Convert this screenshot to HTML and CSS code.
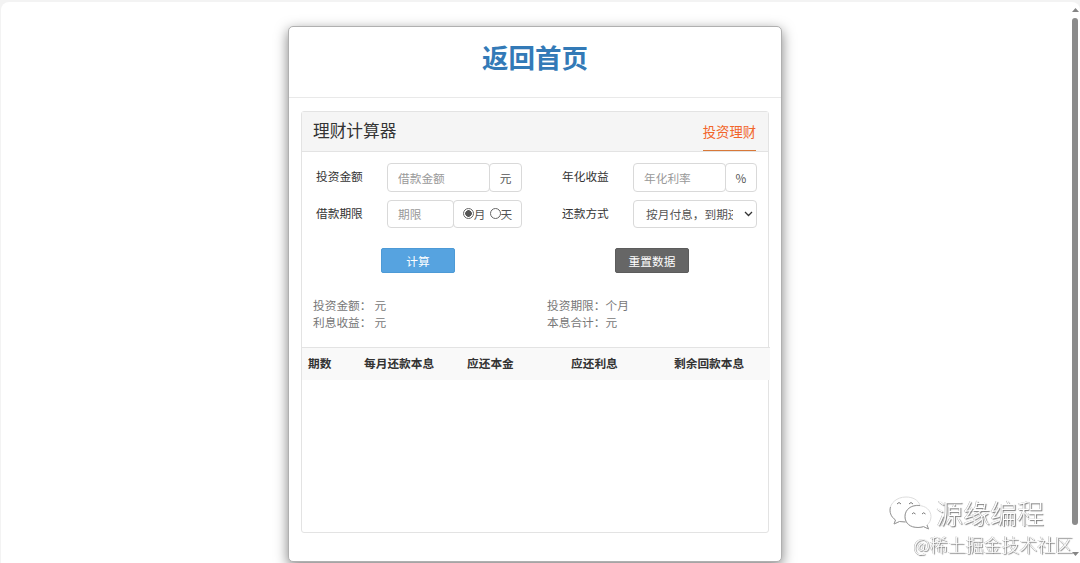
FILE: index.html
```
<!DOCTYPE html>
<html lang="zh-CN">
<head>
    <meta charset="UTF-8">
    <meta name="viewport" content="width=device-width, initial-scale=1.0">
    <title>理财计算器</title>
    <link rel="stylesheet" href="styles.css">
</head>
<body>
    <div class="page">
        <div class="modal-content">
            <div class="modal-header">
                <h1><a href="#">返回首页</a></h1>
            </div>
            <div class="modal-body">
                <div class="panel">
                    <div class="panel-heading">
                        <h3>理财计算器</h3>
                        <a class="tab" href="#">投资理财</a>
                    </div>
                    <form class="calc-form">
                        <div class="form-group">
                            <label for="money">投资金额</label>
                            <div class="input-group">
                                <input type="text" id="money" placeholder="借款金额">
                                <span class="addon unit">元</span>
                            </div>
                        </div>
                        <div class="form-group">
                            <label for="rate">年化收益</label>
                            <div class="input-group">
                                <input type="text" id="rate" placeholder="年化利率">
                                <span class="addon percent">%</span>
                            </div>
                        </div>
                        <div class="form-group">
                            <label for="term">借款期限</label>
                            <div class="input-group">
                                <input type="text" id="term" placeholder="期限">
                                <span class="addon period">
                                    <input type="radio" name="period" checked>月
                                    <input type="radio" name="period" class="day">天
                                </span>
                            </div>
                        </div>
                        <div class="form-group">
                            <label>还款方式</label>
                            <div class="select">
                                <span>按月付息，到期还本</span>
                                <svg width="9" height="6" viewBox="0 0 9 6"><path d="M1 1l3.5 3.5L8 1" fill="none" stroke="#333" stroke-width="1.3"/></svg>
                            </div>
                        </div>
                    </form>
                    <div class="buttons">
                        <button type="button" class="btn btn-primary">计算</button>
                        <button type="button" class="btn btn-reset">重置数据</button>
                    </div>
                    <div class="result">
                        <p>投资金额：<span class="value">元</span></p>
                        <p>投资期限：个月</p>
                        <p>利息收益：<span class="value">元</span></p>
                        <p>本息合计：元</p>
                    </div>
                    <div class="table-head">
                        <span>期数</span>
                        <span>每月还款本息</span>
                        <span>应还本金</span>
                        <span>应还利息</span>
                        <span>剩余回款本息</span>
                    </div>
                </div>
            </div>
        </div>
    </div>

    <div class="scrollbar">
        <svg width="7" height="4" viewBox="0 0 7 4"><path d="M3.5 0L7 4H0z" fill="#858585"/></svg>
        <div class="thumb"></div>
        <svg class="down" width="7" height="4" viewBox="0 0 7 4"><path d="M0 0h7L3.5 4z" fill="#858585"/></svg>
    </div>

    <div class="watermark">
        <div class="brand">
            <svg width="43" height="34" viewBox="0 0 43 34" fill="none" stroke="#999" stroke-width="1">
                <path d="M17 1C8 1 1 7 1 14c0 4 2 7.500 5.500 10l-1.500 4 5.500-2.500 7 .5L31 9C29 4 24 1 17 1z" fill="#fff" stroke="#ddd"/>
                <path d="M1.500 11c-1.500 5 .5 10 5 13l-1.500 4 5.500-2.500 6 .5"/>
                <path d="M29 9.500c-8 0-13 5-13 11s5 11 13 11c2 0 4-.3 5.500-.9l5 2.400-1.500-4c2.500-2 4-5 4-8.500 0-6-5-11-13-11z" fill="#fff" stroke="#ddd"/>
                <path d="M31 9.500c-9-1-15 4-15 11s5 11 13 11c2 0 4-.3 5.500-.9l5 2.400-1.500-4"/>
                <path d="M8 8q2-3 4 0M20 8q2-3 4 0M23 18q1.500-2.500 3.500 0M33 18q1.500-2.500 3.500 0" stroke="#777"/>
            </svg>
            <span>源缘编程</span>
        </div>
        <div class="community">@稀土掘金技术社区</div>
    </div>
</body>
</html>
```

FILE: styles.css
```
* {
    box-sizing: border-box;
}

body {
    margin: 0;
    height: 563px;
    overflow: hidden;
    background-color: #f3f3f3;
    font-family: "Noto Sans CJK SC", sans-serif;
    font-size: 11.7px;
    color: #333;
}

h1, h3, p {
    margin: 0;
    font-weight: normal;
}

a {
    text-decoration: none;
}

.page {
    height: 561px;
    margin: 2px 0 0 1px;
    padding: 24px 0 0 287px;
    border-radius: 8px 8px 0 0;
    background-color: #fff;
}

.modal-content {
    width: 494px;
    height: 536px;
    border: 1px solid #b0b0b0;
    border-radius: 5px;
    background-color: #fff;
    box-shadow: 0 4px 13px rgba(0, 0, 0, 0.5);
}

.modal-header {
    height: 71px;
    padding-top: 10px;
    border-bottom: 1px solid #e9e9e9;
    text-align: center;
}

.modal-header h1 {
    font-size: 26.5px;
    line-height: 40px;
    font-weight: bold;
}

.modal-header a {
    color: #337ab7;
}

.modal-body {
    padding: 13px 12px;
}

.panel {
    width: 468px;
    height: 422px;
    border: 1px solid #e3e3e3;
    border-radius: 3px;
}

.panel-heading {
    display: flex;
    justify-content: space-between;
    height: 40px;
    padding: 0 12px 0 11px;
    background-color: #f5f5f5;
    border-bottom: 1px solid #e3e3e3;
}

.panel-heading h3 {
    font-size: 16.7px;
    line-height: 36px;
}

.tab {
    height: 39px;
    font-size: 13.3px;
    line-height: 40px;
    color: #f2652a;
    border-bottom: 1px solid #d87838;
}

.calc-form {
    display: grid;
    grid-template-columns: 206px 195px;
    grid-template-rows: 29px 28px;
    column-gap: 40px;
    row-gap: 8px;
    padding: 11px 0 0 14px;
}

.form-group {
    display: flex;
    min-width: 0;
}

.form-group label {
    flex: 0 0 71px;
    line-height: 26px;
}

.input-group {
    display: flex;
    flex: 1;
    min-width: 0;
}

.input-group input[type="text"] {
    flex: 1;
    width: 0;
    min-width: 0;
    padding: 0 10px 1px;
    border: 1px solid #d9d9d9;
    border-radius: 4px;
    font-family: inherit;
    font-size: 11.7px;
    background-color: #fff;
}

.input-group input::placeholder {
    color: #999;
}

.addon {
    display: flex;
    flex-shrink: 0;
    align-items: center;
    justify-content: center;
    margin-left: -1px;
    padding-bottom: 1px;
    border: 1px solid #d9d9d9;
    border-radius: 4px;
    color: #555;
}

.unit {
    width: 33px;
}

.percent {
    width: 32px;
}

.period {
    width: 69px;
}

.period input {
    appearance: none;
    flex-shrink: 0;
    width: 11px;
    height: 11px;
    margin: 0;
    border: 1px solid #666;
    border-radius: 50%;
}

.period input:checked {
    background: radial-gradient(circle, #555 3px, #fff 3.6px);
}

.period .day {
    margin-left: 4px;
}

.select {
    display: flex;
    align-items: center;
    justify-content: space-between;
    width: 124px;
    padding: 0 3px 1px 12px;
    border: 1px solid #d9d9d9;
    border-radius: 4px;
    color: #555;
}

.select span {
    width: 87px;
    overflow: hidden;
    white-space: nowrap;
}

.buttons {
    display: flex;
    gap: 160px;
    padding: 20px 0 0 79px;
}

.btn {
    width: 74px;
    height: 25px;
    padding: 0;
    border: 1px solid #4d9ad6;
    border-radius: 2px;
    font-family: inherit;
    font-size: 11.7px;
    line-height: 24px;
    color: #fff;
    background-color: #56a3e0;
}

.btn-reset {
    border-color: #5c5c5c;
    background-color: #666;
}

.result {
    display: grid;
    grid-template-columns: 234px 1fr;
    height: 74px;
    padding: 24px 0 0 11px;
    line-height: 16.5px;
    align-content: start;
    color: #777;
}

.value {
    margin-left: 3px;
}

.table-head {
    display: grid;
    grid-template-columns: 56px 103px 104px 103px 1fr;
    width: 468px;
    height: 33px;
    padding-left: 6px;
    border-top: 1px solid #e3e3e3;
    background-color: #f9f9f9;
    font-weight: bold;
    line-height: 29px;
}

.scrollbar {
    position: fixed;
    top: 0;
    right: 1px;
    width: 8px;
    height: 563px;
    display: flex;
    flex-direction: column;
    align-items: center;
    padding-top: 8px;
}

.thumb {
    width: 6px;
    height: 507px;
    margin-top: 6px;
    border-radius: 3px;
    background-color: #8b8b8b;
}

.down {
    margin-top: 27px;
}

/* white lettering outlined by its shadow */
.watermark {
    position: fixed;
    right: 7px;
    bottom: 6px;
    color: #fff;
    text-align: right;
    text-shadow: 1px 1px 1px #777, -0.5px -0.5px 0 #aaa;
}

.brand {
    display: flex;
    gap: 4px;
    align-items: center;
    justify-content: flex-end;
    padding-right: 29px;
    font-size: 27px;
    font-weight: 300;
    line-height: 36px;
}

.community {
    font-size: 17.9px;
    font-weight: 300;
    line-height: 26px;
}
```
